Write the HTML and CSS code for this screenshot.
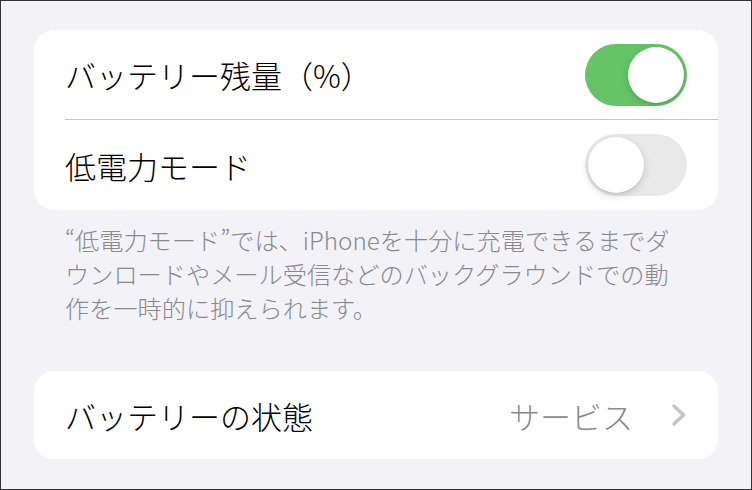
FILE: index.html
```html
<!DOCTYPE html>
<html lang="ja">
<head>
  <meta charset="UTF-8" />
  <meta name="viewport" content="width=device-width, initial-scale=1" />
  <title>バッテリー</title>
  <link rel="stylesheet" href="styles.css">
</head>
<body>

  <div class="pantalla">
    <div class="grupo">
      <div class="fila">
        <span class="etiqueta">バッテリー残量（%）</span>
        <span class="switch on"><span class="perilla"></span></span>
      </div>
      <div class="fila con-linea">
        <span class="etiqueta">低電力モード</span>
        <span class="switch"><span class="perilla"></span></span>
      </div>
    </div>

    <p class="nota">“低電力モード”では、iPhoneを十分に充電できるまでダ<br>ウンロードやメール受信などのバックグラウンドでの動<br>作を一時的に抑えられます。</p>

    <div class="grupo">
      <div class="fila">
        <span class="etiqueta">バッテリーの状態</span>
        <span class="valor">サービス
          <svg class="flecha" width="16" height="24" viewBox="0 0 16 24">
            <path d="M3 3 L12.5 12 L3 21" fill="none" stroke="#c4c4c7" stroke-width="3.4" stroke-linecap="round" stroke-linejoin="round"/>
          </svg>
        </span>
      </div>
    </div>
  </div>

</body>
</html>
```

FILE: styles.css
```css
body {
  margin: 0;
  font-family: "Noto Sans CJK JP", "Noto Sans", sans-serif;
  font-weight: 300;
  color: #000;
}
.pantalla {
  box-sizing: border-box;
  width: 752px;
  height: 490px;
  border: 1px solid #333;
  background: #f2f2f7;
  padding: 29px 33px 0;
}
.grupo {
  background: white;
  border-radius: 20px;
  overflow: hidden;
}
.fila {
  display: flex;
  align-items: center;
  justify-content: space-between;
  height: 89px;
  margin-left: 31px;
  padding-right: 31px;
  font-size: 31px;
}
.con-linea {
  height: 90px;
  border-top: 1px solid #c6c6c8;
}
.etiqueta {
  line-height: 1;
}
.switch {
  position: relative;
  width: 102px;
  height: 62px;
  border-radius: 31px;
  background: #e9e9ea;
}
.switch.on {
  background: #65c466;
}
.perilla {
  position: absolute;
  top: 3px;
  left: 3px;
  width: 56px;
  height: 56px;
  border-radius: 50%;
  background: white;
  box-shadow: 0 3px 8px rgba(0,0,0,0.15), 0 1px 1px rgba(0,0,0,0.08);
}
.switch.on .perilla {
  left: 43px;
}
.nota {
  margin: 0;
  padding: 13px 0 0 31px;
  height: 161px;
  box-sizing: border-box;
  font-size: 24.2px;
  line-height: 34px;
  color: #8a8a8e;
  white-space: nowrap;
}
.fila:only-child {
  height: 88px;
}
.valor {
  display: flex;
  align-items: center;
  gap: 38px;
  color: #8a8a8e;
  line-height: 1;
}
.flecha {
  display: block;
}
```
